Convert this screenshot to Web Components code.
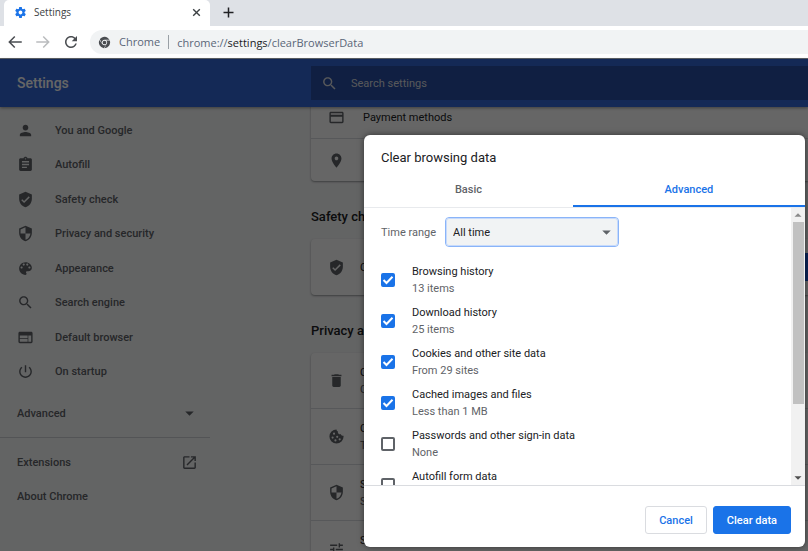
<!DOCTYPE html>
<html lang="en">
<head>
<meta charset="utf-8">
<title>Settings</title>
<style>
  html, body { height: 100%; margin: 0; }
  body { overflow: hidden; font: 11px/17px Roboto, "Liberation Sans", sans-serif; color: #202124; }
</style>
</head>
<body>
<browser-window>
  <tab-strip slot="tabs">Settings</tab-strip>
  <address-bar slot="address" origin="Chrome"><span slot="scheme">chrome://</span><span slot="host">settings</span>/clearBrowserData</address-bar>
  <settings-page>
    <settings-toolbar slot="toolbar">Settings</settings-toolbar>
    <settings-menu slot="menu">
      <menu-item icon="person">You and Google</menu-item>
      <menu-item icon="assignment">Autofill</menu-item>
      <menu-item icon="verified">Safety check</menu-item>
      <menu-item icon="security">Privacy and security</menu-item>
      <menu-item icon="palette">Appearance</menu-item>
      <menu-item icon="search">Search engine</menu-item>
      <menu-item icon="web">Default browser</menu-item>
      <menu-item icon="power">On startup</menu-item>
      <menu-item slot="advanced" end="dropdown">Advanced</menu-item>
      <menu-item slot="more" end="launch">Extensions</menu-item>
      <menu-item slot="more">About Chrome</menu-item>
    </settings-menu>
    <settings-section>
      <settings-row icon="card" compact>Payment methods</settings-row>
      <settings-row icon="place" compact></settings-row>
    </settings-section>
    <settings-section heading="Safety check">
      <settings-row icon="verified" action="Check now">Chrome</settings-row>
    </settings-section>
    <settings-section heading="Privacy and security">
      <settings-row icon="trash">Clear<span slot="sub">Clear</span></settings-row>
      <settings-row icon="cookie">Cookies<span slot="sub">Third</span></settings-row>
      <settings-row icon="security">Security<span slot="sub">Safe</span></settings-row>
      <settings-row icon="tune">Site<span slot="sub">&nbsp;</span></settings-row>
    </settings-section>
    <clear-dialog slot="dialog" heading="Clear browsing data">
      <time-range slot="range">Time range</time-range>
      <data-option note="13 items" checked>Browsing history</data-option>
      <data-option note="25 items" checked>Download history</data-option>
      <data-option note="From 29 sites" checked>Cookies and other site data</data-option>
      <data-option note="Less than 1 MB" checked>Cached images and files</data-option>
      <data-option note="None">Passwords and other sign-in data</data-option>
      <data-option>Autofill form data</data-option>
    </clear-dialog>
  </settings-page>
</browser-window>

<script>
const ICONS = {
  person: 'M12 12c2.21 0 4-1.79 4-4s-1.79-4-4-4-4 1.79-4 4 1.79 4 4 4zm0 2c-2.67 0-8 1.34-8 4v2h16v-2c0-2.66-5.33-4-8-4z',
  assignment: 'M19 3h-4.18C14.4 1.84 13.3 1 12 1c-1.3 0-2.4.84-2.82 2H5c-1.1 0-2 .9-2 2v14c0 1.1.9 2 2 2h14c1.1 0 2-.9 2-2V5c0-1.1-.9-2-2-2zm-7 0c.55 0 1 .45 1 1s-.45 1-1 1-1-.45-1-1 .45-1 1-1zm2 14H7v-2h7v2zm3-4H7v-2h10v2zm0-4H7V7h10v2z',
  verified: 'M12 1L3 5v6c0 5.55 3.84 10.74 9 12 5.16-1.26 9-6.45 9-12V5l-9-4zm-2 16l-4-4 1.41-1.41L10 14.17l6.59-6.59L18 9l-8 8z',
  security: 'M12 1L3 5v6c0 5.55 3.84 10.74 9 12 5.16-1.26 9-6.45 9-12V5l-9-4zm0 10.99h7c-.53 4.12-3.28 7.79-7 8.94V12H5V6.3l7-3.11v8.8z',
  palette: 'M12 3c-4.97 0-9 4.03-9 9s4.03 9 9 9c.83 0 1.5-.67 1.5-1.5 0-.39-.15-.74-.39-1.01-.23-.26-.38-.61-.38-.99 0-.83.67-1.5 1.5-1.5H16c2.76 0 5-2.24 5-5 0-4.42-4.03-8-9-8zm-5.5 9c-.83 0-1.5-.67-1.5-1.5S5.67 9 6.5 9 8 9.67 8 10.5 7.33 12 6.5 12zm3-4C8.67 8 8 7.33 8 6.5S8.67 5 9.5 5s1.5.67 1.5 1.5S10.33 8 9.5 8zm5 0c-.83 0-1.5-.67-1.5-1.5S13.67 5 14.5 5s1.5.67 1.5 1.5S15.33 8 14.5 8zm3 4c-.83 0-1.5-.67-1.5-1.5S16.67 9 17.5 9s1.5.67 1.5 1.5-.67 1.5-1.5 1.5z',
  search: 'M15.5 14h-.79l-.28-.27C15.41 12.59 16 11.11 16 9.5 16 5.91 13.09 3 9.5 3S3 5.91 3 9.5 5.91 16 9.5 16c1.61 0 3.09-.59 4.23-1.57l.27.28v.79l5 4.99L20.49 19l-4.99-5zm-6 0C7.01 14 5 11.99 5 9.5S7.01 5 9.5 5 14 7.01 14 9.5 11.99 14 9.5 14z',
  web: 'M20 4H4c-1.1 0-1.99.9-1.99 2L2 18c0 1.1.9 2 2 2h16c1.1 0 2-.9 2-2V6c0-1.1-.9-2-2-2zm-5 14H4v-4h11v4zm0-5H4V9h11v4zm5 5h-4V9h4v9z',
  power: 'M13 3h-2v10h2V3zm4.83 2.17l-1.42 1.42C17.99 7.86 19 9.81 19 12c0 3.87-3.13 7-7 7s-7-3.13-7-7c0-2.19 1.01-4.14 2.58-5.42L6.17 5.17C4.23 6.82 3 9.26 3 12c0 4.97 4.03 9 9 9s9-4.03 9-9c0-2.74-1.23-5.18-3.17-6.83z',
  launch: 'M19 19H5V5h7V3H5c-1.11 0-2 .9-2 2v14c0 1.1.89 2 2 2h14c1.1 0 2-.9 2-2v-7h-2v7zM14 3v2h3.59l-9.83 9.83 1.41 1.41L19 6.41V10h2V3h-7z',
  dropdown: 'M6 9l6 6 6-6z',
  card: 'M20 4H4c-1.11 0-1.99.89-1.99 2L2 18c0 1.11.89 2 2 2h16c1.11 0 2-.89 2-2V6c0-1.11-.89-2-2-2zm0 14H4v-7h16v7zm0-10H4V6h16v2z',
  place: 'M12 2C8.13 2 5 5.13 5 9c0 5.25 7 13 7 13s7-7.75 7-13c0-3.87-3.13-7-7-7zm0 9.5c-1.38 0-2.5-1.12-2.5-2.5s1.12-2.5 2.5-2.5 2.5 1.12 2.5 2.5-1.12 2.5-2.5 2.5z',
  trash: 'M6 19c0 1.1.9 2 2 2h8c1.1 0 2-.9 2-2V7H6v12zM19 4h-3.5l-1-1h-5l-1 1H5v2h14V4z',
  cookie: 'M12 2a10 10 0 1 0 10 10c0-.4 0-.8-.1-1.2a3 3 0 0 1-3.9-2.3 3 3 0 0 1-4-3.6A3 3 0 0 1 12 2zM8.5 6.5a1.5 1.5 0 1 1 0 3 1.5 1.5 0 0 1 0-3zm-2 5.5a1.5 1.5 0 1 1 0 3 1.5 1.5 0 0 1 0-3zm6.5-1a1.5 1.5 0 1 1 0 3 1.5 1.5 0 0 1 0-3zm-2.5 5a1.5 1.5 0 1 1 0 3 1.5 1.5 0 0 1 0-3zm6-1.5a1.5 1.5 0 1 1 0 3 1.5 1.5 0 0 1 0-3z',
  tune: 'M3 17v2h6v-2H3zM3 5v2h10V5H3zm10 16v-2h8v-2h-8v-2h-2v6h2zM7 9v2H3v2h4v2h2V9H7zm14 4v-2H11v2h10zm-6-4h2V7h4V5h-4V3h-2v6z',
  gear: 'M19.43 12.98c.04-.32.07-.64.07-.98s-.03-.66-.07-.98l2.11-1.65c.19-.15.24-.42.12-.64l-2-3.46c-.12-.22-.39-.3-.61-.22l-2.49 1c-.52-.4-1.08-.73-1.69-.98l-.38-2.65C14.46 2.18 14.25 2 14 2h-4c-.25 0-.46.18-.49.42l-.38 2.65c-.61.25-1.17.59-1.69.98l-2.49-1c-.23-.09-.49 0-.61.22l-2 3.46c-.13.22-.07.49.12.64l2.11 1.65c-.04.32-.07.65-.07.98s.03.66.07.98l-2.11 1.65c-.19.15-.24.42-.12.64l2 3.46c.12.22.39.3.61.22l2.49-1c.52.4 1.08.73 1.69.98l.38 2.65c.03.24.24.42.49.42h4c.25 0 .46-.18.49-.42l.38-2.65c.61-.25 1.17-.59 1.69-.98l2.49 1c.23.09.49 0 .61-.22l2-3.46c.12-.22.07-.49-.12-.64l-2.11-1.65zM12 15.5c-1.93 0-3.5-1.57-3.5-3.5s1.57-3.5 3.5-3.5 3.5 1.57 3.5 3.5-1.57 3.5-3.5 3.5z',
  back: 'M21 11H6.83l5.59-5.59L11 4l-8 8 8 8 1.41-1.41L6.83 13H21z',
  forward: 'M3 11h14.17l-5.59-5.59L13 4l8 8-8 8-1.41-1.41L17.17 13H3z',
  reload: 'M17.65 6.35C16.2 4.9 14.21 4 12 4c-4.42 0-7.99 3.58-7.99 8s3.57 8 7.99 8c3.73 0 6.84-2.55 7.73-6h-2.08c-.82 2.33-3.04 4-5.65 4-3.31 0-6-2.69-6-6s2.69-6 6-6c1.66 0 3.14.69 4.22 1.78L13 11h7V4l-2.35 2.35z',
  close: 'M19 6.8 17.2 5 12 10.2 6.8 5 5 6.8 10.2 12 5 17.2 6.8 19l5.2-5.2 5.2 5.2 1.8-1.8-5.2-5.2z',
  add: 'M20 10.8h-6.8V4h-2.4v6.8H4v2.4h6.8V20h2.4v-6.8H20z',
  chrome: 'M12 7h9.2A10.5 10.5 0 0 0 3.3 6.2l4.2 7A4.8 4.8 0 0 1 12 7zM2.7 7.4a10.5 10.5 0 0 0 8.2 15l4.1-6.700a4.8 4.8 0 0 1-7.3-1zM21.7 8.4h-6.5a4.8 4.8 0 0 1 .9 6l-4.1 8.1a10.5 10.5 0 0 0 9.7-14.1zM12 8.6a3.400 3.400 0 1 0 0 6.800 3.400 3.400 0 0 0 0-6.800z',
};

// Registers an element whose shadow root is filled from a template function
const define = (name, css, markup, ready) => {
  customElements.define(name, class extends HTMLElement {
    connectedCallback() {
      if (this.shadowRoot) return;
      const root = this.attachShadow({ mode: 'open' });
      root.innerHTML = `<style>
        :host, * { box-sizing: border-box; }
        button, input, select { font: inherit; margin: 0; }
        ${css}
      </style>${markup(this)}`;
      if (ready) ready.call(this, root);
    }
  });
};

define('ui-icon', `
  :host { display: block; flex: none; width: 17px; height: 17px; }
  svg { display: block; width: 100%; height: 100%; fill: currentColor; }
`, (el) => `<svg viewBox="0 0 24 24" aria-hidden="true"><path fill-rule="evenodd" d="${ICONS[el.getAttribute('name')]}"/></svg>`);

define('browser-window', `
  :host { display: flex; flex-direction: column; height: 100vh; background: #fff; }
`, () => `<slot name="tabs"></slot><slot name="address"></slot><slot></slot>`);

define('tab-strip', `
  :host { display: flex; align-items: stretch; height: 26px; padding-left: 4px; background: #dee1e6;
    font: 10px/17px "Open Sans", sans-serif; color: #3c4043; }
  .tab { display: flex; align-items: center; gap: 7px; width: 206px; padding: 0 7px 2px 10px;
    background: #fff; border-radius: 5px 5px 0 0; }
  .title { flex: 1; }
  button { display: flex; align-items: center; padding: 0; border: 0; background: none; color: #3c4043; }
  .tab > ui-icon { width: 13px; height: 13px; color: #1a73e8; }
  .close ui-icon { width: 13px; height: 13px; }
  .add { padding: 0 0 2px 11px; color: #202124; }
  .add ui-icon { width: 15px; height: 15px; }
`, () => `
  <div class="tab">
    <ui-icon name="gear"></ui-icon>
    <span class="title"><slot></slot></span>
    <button class="close" aria-label="Close tab"><ui-icon name="close"></ui-icon></button>
  </div>
  <button class="add" aria-label="New tab"><ui-icon name="add"></ui-icon></button>
`);

define('address-bar', `
  :host { display: flex; align-items: center; gap: 10px; height: 33px; padding-left: 6px;
    border-bottom: 1px solid #5f6368; background: #fff; font: 11px/17px "Open Sans", sans-serif; color: #5a6678; }
  button { display: flex; padding: 0; border: 0; background: none; color: #4a4d51; }
  button:disabled { color: #babcbe; }
  button ui-icon { width: 18px; height: 18px; }
  .field { flex: 1; display: flex; align-items: center; height: 24px; padding-left: 8px;
    border-radius: 12px 0 0 12px; background: #f1f3f4; }
  .field ui-icon { width: 13px; height: 13px; margin-right: 8px; color: #4a4d51; }
  .origin { padding-right: 8px; margin-right: 8px; border-right: 1px solid #9aa0a6; line-height: 14px; }
  ::slotted([slot=host]) { color: #202124; }
`, (el) => `
  <button aria-label="Back"><ui-icon name="back"></ui-icon></button>
  <button aria-label="Forward" disabled><ui-icon name="forward"></ui-icon></button>
  <button aria-label="Reload"><ui-icon name="reload"></ui-icon></button>
  <div class="field">
    <ui-icon name="chrome"></ui-icon>
    <span class="origin">${el.getAttribute('origin')}</span>
    <span><slot name="scheme"></slot><slot name="host"></slot><slot></slot></span>
  </div>
`);

define('settings-page', `
  :host { position: relative; flex: 1; display: flex; flex-direction: column; min-height: 0; background: #f8f9fa; }
  .columns { flex: 1; display: grid; grid-template-columns: 311px 1fr; min-height: 0; overflow: hidden; }
  /* the list is scrolled so that its first row sits partly under the toolbar */
  main { min-width: 0; margin-top: -10px; }
  .backdrop { position: absolute; inset: 0; display: flex; justify-content: flex-end;
    padding: 76px 3px 4px; background: rgba(0, 0, 0, .6); }
`, () => `
  <slot name="toolbar"></slot>
  <div class="columns">
    <slot name="menu"></slot>
    <main><slot></slot></main>
  </div>
  <div class="backdrop"><slot name="dialog"></slot></div>
`);

define('settings-toolbar', `
  :host { display: grid; grid-template-columns: 311px 1fr; align-items: center; height: 48px; flex: none;
    background: #3367d6; color: #fff; box-shadow: 0 1px 3px rgba(0, 0, 0, .4); z-index: 0; }
  h1 { margin: 0; padding-left: 17px; font-size: 14px; line-height: 20px; font-weight: 500; }
  label { display: flex; align-items: center; gap: 13px; height: 34px; padding-left: 10px;
    background: #294fa6; color: #dadce0; }
  input { flex: 1; min-width: 0; padding: 0; border: 0; background: none; color: inherit; }
  input::placeholder { color: inherit; opacity: 1; }
`, () => `
  <h1><slot></slot></h1>
  <label><ui-icon name="search"></ui-icon><input type="search" placeholder="Search settings" aria-label="Search settings"></label>
`);

define('settings-menu', `
  :host { display: block; padding-top: 6px; color: #5f6368; }
  nav { width: 210px; }
  .main { display: grid; grid-auto-rows: 1fr; height: 276px; }
  .advanced { padding: 7px 0; border-bottom: 1px solid #d0d3d6; }
  .more { padding-top: 7px; }
`, () => `
  <nav>
    <div class="main"><slot></slot></div>
    <div class="advanced"><slot name="advanced"></slot></div>
    <div class="more"><slot name="more"></slot></div>
  </nav>
`);

define('menu-item', `
  :host { display: block; }
  a { display: flex; align-items: center; gap: 21px; height: 100%; min-height: 34px; padding: 0 12px 0 17px;
    color: inherit; text-decoration: none; font-weight: 500; }
  span { flex: 1; }
`, (el) => {
  const icon = el.getAttribute('icon');
  const end = el.getAttribute('end');
  return `<a href="#">
    ${icon ? `<ui-icon name="${icon}"></ui-icon>` : ''}
    <span><slot></slot></span>
    ${end ? `<ui-icon name="${end}"></ui-icon>` : ''}
  </a>`;
});

define('settings-section', `
  :host { display: block; }
  h2 { margin: 26px 0 12px; font-size: 13px; line-height: 20px; font-weight: 500; }
  .card { background: #fff; border-radius: 4px 0 0 4px; box-shadow: 0 1px 2px rgba(60, 64, 67, .5); }
`, (el) => {
  const heading = el.getAttribute('heading');
  return `${heading ? `<h2>${heading}</h2>` : ''}<div class="card"><slot></slot></div>`;
});

define('settings-row', `
  :host { display: flex; align-items: center; gap: 15px; height: 56px; padding-left: 17px;
    border-bottom: 1px solid #dadce0; overflow: hidden; white-space: nowrap; }
  :host([compact]) { height: 42px; gap: 18px; }
  :host(:last-child) { border-bottom: 0; }
  ui-icon { color: #5f6368; }
  .text { flex: 1; min-width: 0; }
  .sub { color: #5f6368; }
  button { flex: none; width: 80px; height: 28px; border: 0; background: #1a56d6; }
`, (el) => {
  const action = el.getAttribute('action');
  return `
    <ui-icon name="${el.getAttribute('icon')}"></ui-icon>
    <div class="text"><div><slot></slot></div><div class="sub"><slot name="sub"></slot></div></div>
    ${action ? `<button aria-label="${action}"></button>` : ''}`;
});

define('clear-dialog', `
  :host { display: flex; flex-direction: column; width: 441px; max-width: 100%; border-radius: 6px;
    background: #fff; box-shadow: 0 0 6px rgba(0, 0, 0, .5); overflow: hidden; }
  h2 { margin: 0; padding: 13px 17px 10px; font-size: 13px; line-height: 20px; font-weight: 400; }
  .tabs { display: grid; grid-template-columns: 9fr 10fr; border-bottom: 1px solid #e8eaed; }
  .tabs button { height: 29px; padding: 0 0 5px; border: 0; border-bottom: 2px solid transparent; background: none;
    color: #5f6368; font-weight: 500; }
  .tabs button[aria-selected=true] { color: #1a73e8; border-color: #1a73e8; }
  .body { flex: 1; display: flex; min-height: 0; }
  .list { flex: 1; padding: 9px 17px 0; overflow: hidden; }
  footer { display: flex; justify-content: flex-end; gap: 6px; padding: 20px 14px 13px; border-top: 1px solid #dadce0; }
  footer button { height: 28px; padding: 0 13px; border: 1px solid #dadce0; border-radius: 3px; background: #fff;
    color: #1a73e8; font-weight: 500; }
  footer .primary { border-color: #1a73e8; background: #1a73e8; color: #fff; }
`, (el) => `
  <h2>${el.getAttribute('heading')}</h2>
  <div class="tabs" role="tablist">
    <button role="tab" aria-selected="false">Basic</button>
    <button role="tab" aria-selected="true">Advanced</button>
  </div>
  <div class="body">
    <div class="list"><slot name="range"></slot><slot></slot></div>
    <scroll-track></scroll-track>
  </div>
  <footer>
    <button>Cancel</button>
    <button class="primary">Clear data</button>
  </footer>
`, function (root) {
  const tabs = root.querySelectorAll('[role=tab]');
  tabs.forEach((tab) => tab.addEventListener('click', () => {
    tabs.forEach((t) => t.setAttribute('aria-selected', t === tab));
  }));
});

define('scroll-track', `
  :host { display: grid; grid-template-rows: 14px 1fr 14px; width: 14px; background: #f1f1f1; color: #505050; }
  ui-icon { width: 14px; height: 14px; }
  .up { transform: rotate(180deg); color: #8a8a8a; }
  .thumb { height: 73%; margin: 0 1px 0 2px; background: #c1c1c1; }
`, () => `<ui-icon class="up" name="dropdown"></ui-icon><div><div class="thumb"></div></div><ui-icon name="dropdown"></ui-icon>`);

define('time-range', `
  :host { display: flex; align-items: center; gap: 9px; margin-bottom: 16px; color: #5f6368; }
  .select { display: grid; align-items: center; width: 174px; }
  select, ui-icon { grid-area: 1 / 1; }
  select { appearance: none; width: 100%; height: 30px; padding: 0 7px; border: 1px solid #8ab4f8; border-radius: 4px;
    outline: 1px solid #c6dafc; outline-offset: -2px; background: #f1f3f4; color: #202124; }
  ui-icon { justify-self: end; margin-right: 4px; pointer-events: none; }
`, () => `
  <label for="range"><slot></slot></label>
  <div class="select">
    <select id="range"><option>All time</option></select>
    <ui-icon name="dropdown"></ui-icon>
  </div>
`);

define('data-option', `
  :host { display: block; height: 41px; }
  label { display: flex; align-items: center; gap: 17px; height: 34px; }
  input { appearance: none; flex: none; display: grid; width: 14px; height: 14px; border: 2px solid #5f6368; border-radius: 2px; background: #fff; }
  input:checked { border-color: #1a73e8; background: #1a73e8; }
  .box { display: grid; }
  .box > * { grid-area: 1 / 1; }
  svg { width: 14px; height: 14px; fill: none; stroke: #fff; stroke-width: 2; pointer-events: none; }
  input:not(:checked) + svg { display: none; }
  .text { height: 34px; }
  .note { color: #5f6368; }
`, (el) => `
  <label>
    <span class="box">
      <input type="checkbox" ${el.hasAttribute('checked') ? 'checked' : ''}>
      <svg viewBox="0 0 14 14" aria-hidden="true"><path d="M2.5 7 5.5 10 11.5 3.8"/></svg>
    </span>
    <div class="text"><div><slot></slot></div><div class="note">${el.getAttribute('note') || ''}</div></div>
  </label>
`);
</script>
</body>
</html>
